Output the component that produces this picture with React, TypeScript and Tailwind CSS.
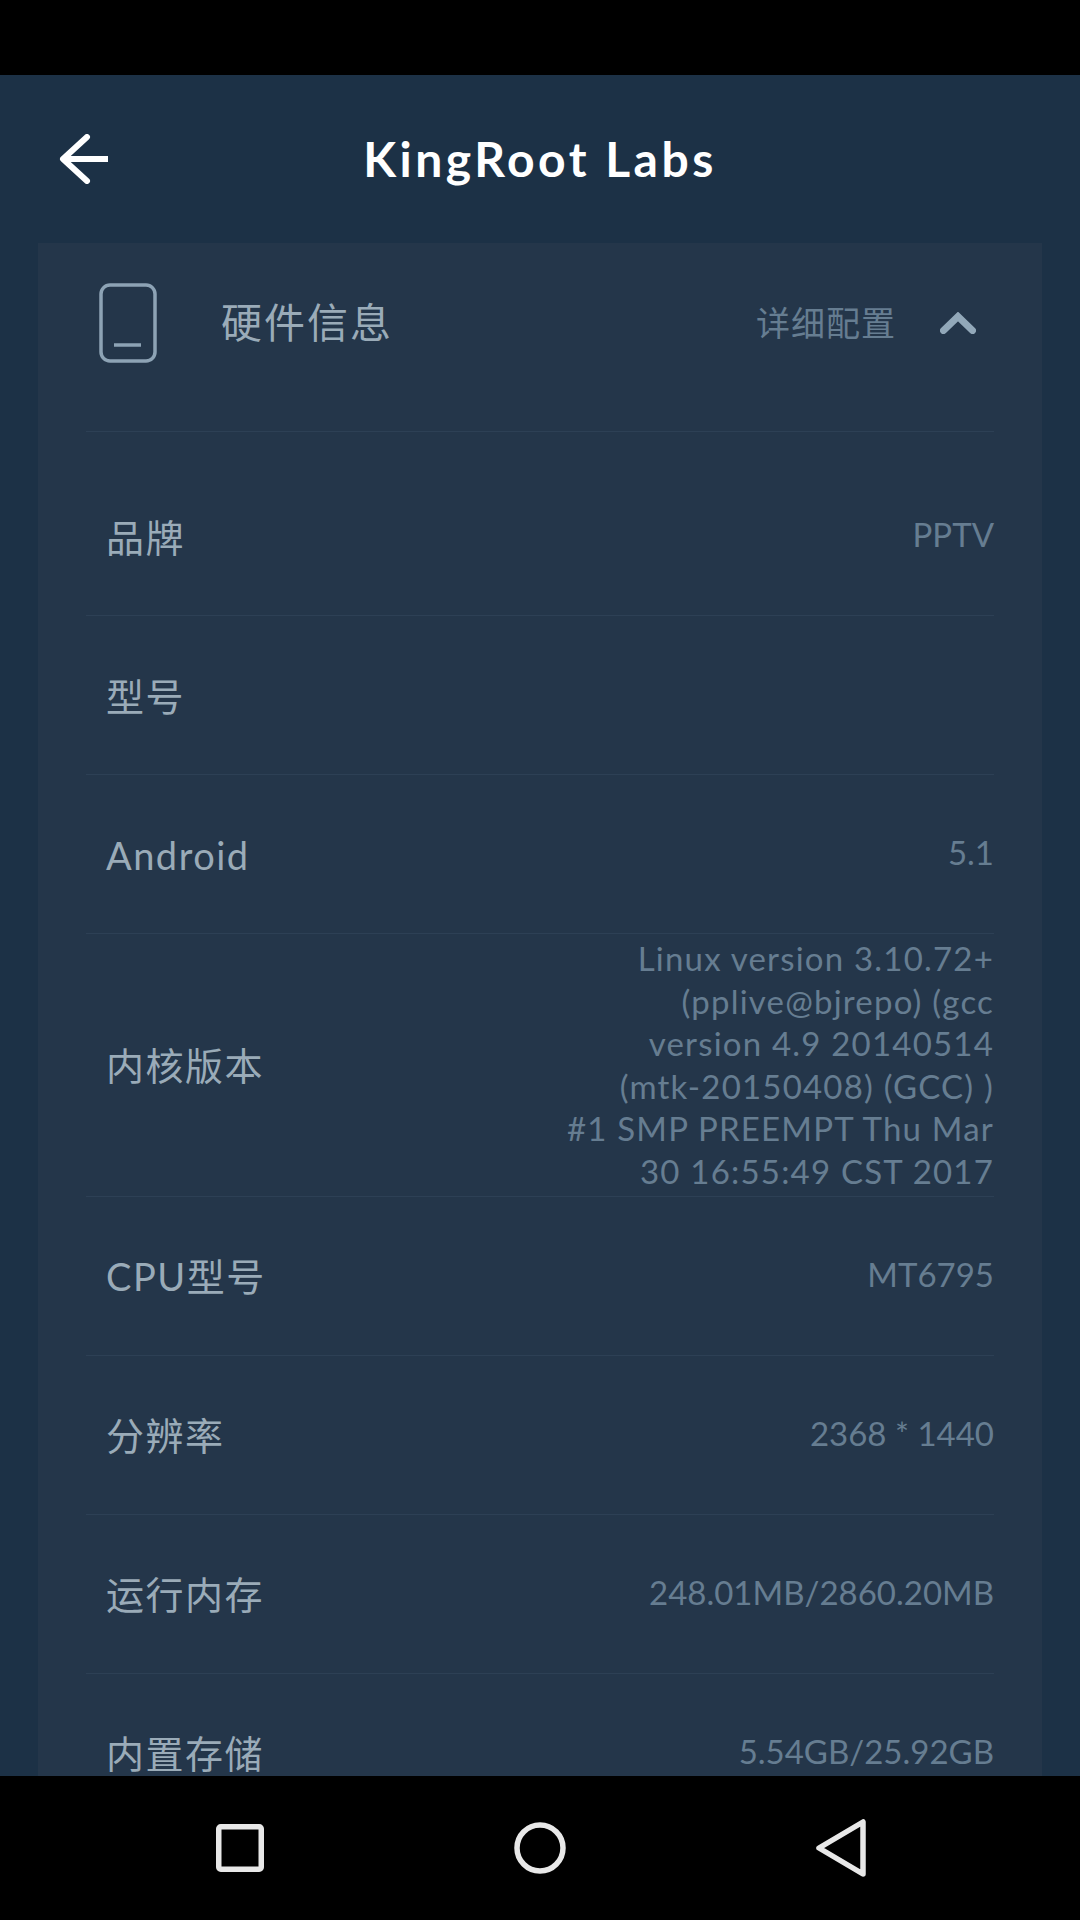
import React from 'react';

const specs: { label: string; value?: string[] }[] = [
  { label: '品牌', value: ['PPTV'] },
  { label: '型号' },
  { label: 'Android', value: ['5.1'] },
  {
    label: '内核版本',
    value: [
      'Linux version 3.10.72+',
      '(pplive@bjrepo) (gcc',
      'version 4.9 20140514',
      '(mtk-20150408) (GCC) )',
      '#1 SMP PREEMPT Thu Mar',
      '30 16:55:49 CST 2017',
    ],
  },
  { label: 'CPU型号', value: ['MT6795'] },
  { label: '分辨率', value: ['2368 * 1440'] },
  { label: '运行内存', value: ['248.01MB/2860.20MB'] },
  { label: '内置存储', value: ['5.54GB/25.92GB'] },
];

const SpecRow: React.FC<{ label: string; value?: string[] }> = ({ label, value }) => (
  <div className="flex min-h-[159px] shrink-0 items-center justify-between border-b border-[#2d4055] py-[3px]">
    <span className="pl-[20px] pt-[1px] text-[38px] leading-[44px] tracking-[1.5px] text-[#9aabb8]">{label}</span>
    <div
      className={
        value && value.length > 1
          ? 'text-right text-[33px] leading-[42.6px] tracking-[1.2px] text-[#667d91]'
          : 'pb-[3px] text-right text-[33px] leading-[42.6px] text-[#667d91]'
      }
    >
      {value?.map((line) => (
        <div key={line}>{line}</div>
      ))}
    </div>
  </div>
);

export default function App() {
  return (
    <div className="flex h-[1920px] w-[1080px] flex-col overflow-hidden bg-black font-['Lato','Noto_Sans_CJK_SC',sans-serif]">
      {/* Status bar */}
      <div className="h-[75px] shrink-0 bg-black" />

      <div className="flex min-h-0 flex-1 flex-col overflow-hidden bg-[#1c3146]">
        {/* Header */}
        <div className="relative flex h-[168px] shrink-0 items-center justify-center">
          <button className="absolute left-[59px] top-[59px]">
            <svg width="50" height="50" viewBox="0 0 50 50" fill="none" stroke="#ffffff" strokeWidth="6">
              <path d="M49 25H6" />
              <path d="M28 3L4 25l24 22" strokeLinecap="round" strokeLinejoin="round" />
            </svg>
          </button>
          <h1 className="text-[48px] font-bold leading-none tracking-[3.5px] text-white">KingRoot Labs</h1>
        </div>

        {/* Hardware card */}
        <div className="mx-[38px] flex min-h-0 flex-1 flex-col overflow-hidden bg-[#24364a] px-[48px]">
          <div className="flex h-[189px] shrink-0 items-center border-b border-[#2d4055] pb-[29px] pl-[13px] pr-[18px]">
            <svg width="58" height="80" viewBox="0 0 58 80" fill="none" stroke="#8da3b5">
              <rect x="2" y="2" width="54" height="76" rx="9" strokeWidth="3.5" />
              <path d="M15 62h27" strokeWidth="3.5" />
            </svg>
            <span className="ml-[64px] text-[41px] leading-none tracking-[2px] text-[#9aabb8]">硬件信息</span>
            <span className="ml-auto text-[34px] leading-none tracking-[1px] text-[#667d91]">详细配置</span>
            <svg className="ml-[44px]" width="36" height="22" viewBox="0 0 36 22" fill="none" stroke="#92a8b9" strokeWidth="7" strokeLinecap="round">
              <path d="M3.5 18.5L18 4.5l14.5 14" />
            </svg>
          </div>

          <div className="flex flex-col pt-[25px]">
            {specs.map((spec) => (
              <SpecRow key={spec.label} label={spec.label} value={spec.value} />
            ))}
          </div>
        </div>
      </div>

      {/* Navigation bar */}
      <div className="flex h-[144px] shrink-0 items-center bg-black pl-[216px] pr-[214px]">
        <div className="flex w-full items-center justify-between">
          <svg width="48" height="48" viewBox="0 0 48 48" fill="none" stroke="#e8e8e8" strokeWidth="5.5">
            <rect x="2.75" y="2.75" width="42.5" height="42.5" rx="2" />
          </svg>
          <svg width="52" height="52" viewBox="0 0 52 52" fill="none" stroke="#e8e8e8" strokeWidth="5.5">
            <circle cx="26" cy="26" r="23" />
          </svg>
          <svg width="50" height="58" viewBox="0 0 50 58" fill="none" stroke="#e8e8e8" strokeWidth="5.5" strokeLinejoin="round">
            <path d="M47 3v52L3 29z" />
          </svg>
        </div>
      </div>
    </div>
  );
}
